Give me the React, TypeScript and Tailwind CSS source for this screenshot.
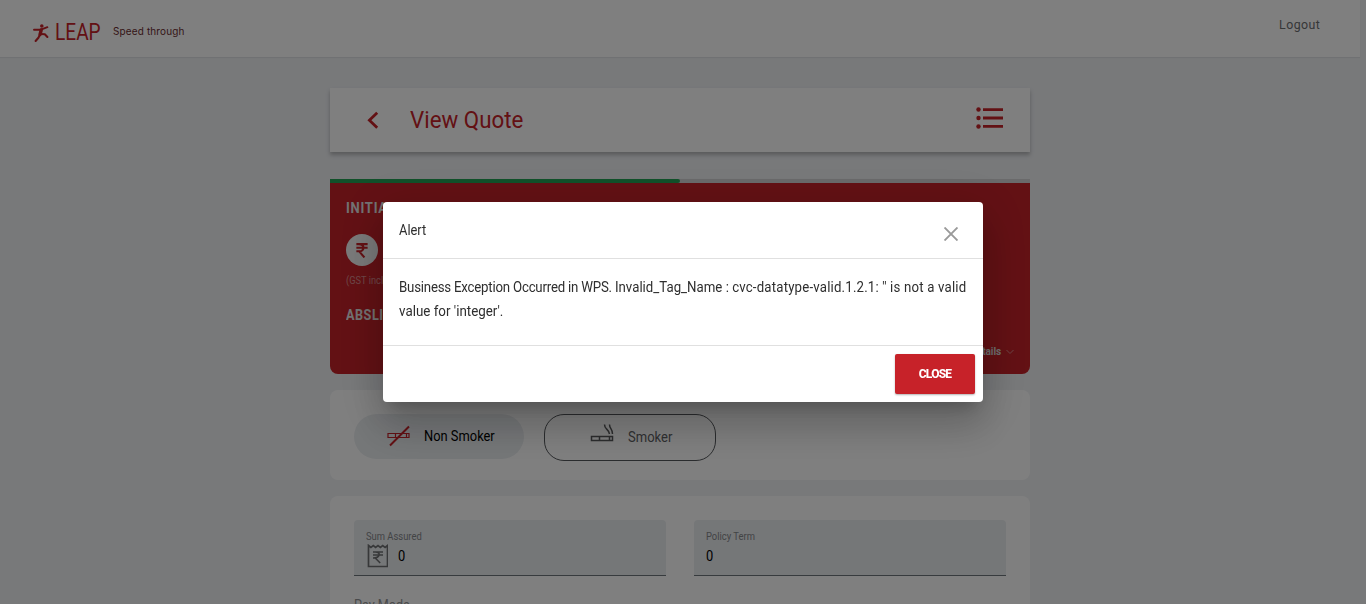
import React from "react";

function LeapFigure() {
  return (
    <svg className="h-[20px] w-[17px]" viewBox="0 0 17 20" fill="none" stroke="#c72229" strokeLinecap="round" strokeLinejoin="round">
      <circle cx="9.8" cy="3" r="1.8" fill="#c72229" stroke="none" />
      <path d="M2 6.800l6.200 0L15.400 4.200" strokeWidth="1.9" />
      <path d="M9.200 7L8 11.600" strokeWidth="3.4" />
      <path d="M7.600 12.400l-1.200 2.400L3.600 18" strokeWidth="2.1" />
      <path d="M8.800 11l4 .3 2.600 2.600" strokeWidth="2.1" />
    </svg>
  );
}

function Rupee({ className }: { className: string }) {
  return (
    <svg className={className} viewBox="0 0 12 16" fill="none" stroke="currentColor">
      <path d="M0 1.2h12M0 5h12M2.6 1.2C9.2 1.2 9.2 8.8 3 8.8H0M3 9l5.6 6.4" strokeWidth="2.2" />
    </svg>
  );
}

function Header() {
  return (
    <header className="flex h-[57px] w-[1360px] shrink-0 justify-between bg-white shadow-[0_1px_1px_rgba(0,0,0,0.06)]">
      <div className="flex h-[65px] items-center pl-8">
        <LeapFigure />
        <span className="ml-1.5 w-[50px] origin-left scale-x-[0.83] pt-px text-[23px] leading-6 text-[#c72229]">LEAP</span>
        <span className="ml-2 origin-left scale-x-[0.95] pb-px font-['Inter',sans-serif] text-[10.5px] tracking-[0.15px] text-[#6b2d30]">
          Speed through
        </span>
      </div>
      <a className="mr-10 w-[41.500px] origin-left scale-x-[0.95] pt-[15px] text-[13px] leading-5 tracking-[0.5px] text-[#6d6e71]">Logout</a>
    </header>
  );
}

function TitleBar() {
  return (
    <section className="mt-[31px] flex h-16 items-center justify-between bg-white pr-[27px] pl-9 shadow-[0_3px_4px_rgba(0,0,0,0.25)]">
      <div className="flex items-center">
        <svg className="h-[18px] w-3.5" viewBox="0 0 14 18" fill="none" stroke="#c72229" strokeWidth="2.8">
          <path d="M11.200 1.800L3.400 9.300l7.800 7.500" />
        </svg>
        <h1 className="ml-[30px] origin-left scale-x-[0.93] text-[24px] leading-8 text-[#c72229]">View Quote</h1>
      </div>
      <svg className="mb-[5px] h-[22px] w-[27px]" viewBox="0 0 27 22" fill="#c72229">
        <circle cx="2.5" cy="2.5" r="2.2" />
        <circle cx="2.5" cy="11" r="2.2" />
        <circle cx="2.5" cy="19.5" r="2.2" />
        <path d="M7 1.200h20v2.700H7zM7 9.600h20v2.800H7zM7 18.100h20v2.700H7z" />
      </svg>
    </section>
  );
}

function PremiumCard() {
  return (
    <section className="mt-[27px] h-[195px] overflow-hidden rounded-b-lg bg-[#c72229] text-white">
      <div className="h-1 bg-[#d4d5d6]">
        <div className="h-1 w-1/2 rounded-r-xs bg-[#22a355]" />
      </div>
      <div className="flex h-[191px] flex-col px-4 pt-[15px]">
        <h2 className="origin-left scale-x-[0.93] text-[14px] leading-5 font-bold tracking-[0.8px] text-[#e6e6e6]">INITIAL</h2>
        <div className="mt-4 flex size-8 items-center justify-center rounded-full bg-[#f4f4f4] text-[#c72229]">
          <Rupee className="h-[15px] w-3" />
        </div>
        <p className="mt-[5px] origin-left scale-x-[0.93] text-[10px] leading-5 text-[#dc8f92]">(GST included)</p>
        <h2 className="mt-[14px] origin-left scale-x-[0.9] text-[14px] leading-5 font-bold tracking-[0.6px] text-[#e6e6e6]">ABSLI</h2>
        <div className="mt-[19px] flex items-center justify-end text-[#dedede]">
          <span className="text-[10px] leading-4 font-bold tracking-[-0.1px]">Details</span>
          <svg className="ml-[5px] h-2 w-2" viewBox="0 0 8 8" fill="none" stroke="#d8898c">
            <path d="M.5 2L4 5.500 7.500 2" />
          </svg>
        </div>
      </div>
    </section>
  );
}

function SmokerCard() {
  return (
    <section className="mt-4 flex h-[90px] gap-5 rounded-lg bg-white p-6">
      <button className="flex h-[45px] w-[170px] items-center rounded-full bg-[#ebeef1] pl-[33px]">
        <svg className="mb-px h-[22px] w-6" viewBox="0 0 24 22" fill="none" stroke="#c72229">
          <path d="M1 8.500h21v4H1zM8.500 8.500v4M19.500 8.500v4" strokeWidth="1.2" />
          <path d="M3 20.500L22 1.500" strokeWidth="1.9" />
        </svg>
        <span className="ml-[13px] origin-left scale-x-[0.92] text-[14px] whitespace-nowrap text-black">Non Smoker</span>
      </button>
      <button className="flex h-[47px] w-[172px] items-center rounded-[20px] border border-[#55585c] pl-[45px]">
        <svg className="mb-2.5 h-5 w-6" viewBox="0 0 24 20" fill="none" stroke="#58595b">
          <path d="M1.500 13.500h21v4h-21zM9.500 13.500v4M19.500 13.500v4" strokeWidth="1.5" />
          <path d="M14.500 1.500c0 5 4 4 5 9.500M19.500 1.500c0 4.500 3 4 3 9.500" strokeWidth="1.5" />
        </svg>
        <span className="ml-3.5 origin-left scale-x-[0.93] text-[14px] text-[#606164]">Smoker</span>
      </button>
    </section>
  );
}

function Field({ label, icon }: { label: string; icon?: React.ReactNode }) {
  return (
    <div className="h-14 w-[312px] rounded-t border-b border-[#6f777c] bg-[#ebeef1] px-3 pt-2.5">
      <div className="origin-left scale-x-[0.94] text-[10px] leading-[13px] text-[#85888b]">{label}</div>
      <div className="flex h-[26px] items-center">
        {icon}
        <span className="origin-left scale-x-[0.92] text-[14px] leading-6 text-black">0</span>
      </div>
    </div>
  );
}

function ReceiptIcon() {
  return (
    <svg className="mr-2.5 mb-px h-6 w-[22px] shrink-0" viewBox="0 0 22 24" fill="none" stroke="#6f7173">
      <path d="M2.500 1.500l2.400 2 2.400-2 2.300 2 2.400-2 2.400 2 2.300-2 2.400 2 2.400-2v21h-19z" strokeWidth="1.700" />
      <path d="M7 8h10M7 11h10M9.500 8c5.500 0 5 6-2.500 6M9.200 14l5 5" strokeWidth="1.600" />
    </svg>
  );
}

function DetailsCard() {
  return (
    <section className="mt-4 h-[240px] rounded-lg bg-white p-6">
      <div className="flex justify-between">
        <Field label="Sum Assured" icon={<ReceiptIcon />} />
        <Field label="Policy Term" />
      </div>
      <div className="mt-[19px] origin-left scale-x-[0.9] text-[14px] leading-5 text-[#939597]">Pay Mode</div>
    </section>
  );
}

function AlertDialog() {
  return (
    <div className="fixed inset-0 flex items-center justify-center bg-black/50">
      <div
        role="alertdialog"
        className="flex h-[200px] w-[600px] flex-col rounded bg-white text-[#2e2e2e] shadow-[0_11px_15px_-7px_rgba(0,0,0,0.2),0_24px_38px_3px_rgba(0,0,0,0.14),0_9px_46px_8px_rgba(0,0,0,0.12)]"
      >
        <div className="flex h-[57px] items-center justify-between border-b border-[#e0e0e0] pr-[25px] pl-4">
          <span className="origin-left scale-x-[0.92] text-[14px] leading-6">Alert</span>
          <svg className="mt-2 h-3.5 w-3.5" viewBox="0 0 14 14" stroke="#999" strokeWidth="1.900">
            <path d="M.5.5l13 13M13.500.5l-13 13" />
          </svg>
        </div>
        <p className="h-[87px] border-b border-[#e0e0e0] px-4 pt-4 text-[14px] leading-6">
          <span className="block origin-left scale-x-[0.946] whitespace-nowrap">
            <span className="tracking-[-0.22px]">Business Exception Occurred in WPS. </span>
            <span>Invalid_Tag_Name : </span>
            <span className="tracking-[0.19px]">cvc-datatype-valid.1.2.1: '' is not a valid</span>
          </span>
          <span className="block origin-left scale-x-[0.955]">value for 'integer'.</span>
        </p>
        <div className="flex justify-end p-2">
          <button className="h-10 w-20 rounded-xs bg-[#c72229] text-[12px] font-extrabold tracking-[-0.75px] text-white shadow-[0_1px_2px_rgba(0,0,0,0.3)]">
            CLOSE
          </button>
        </div>
      </div>
    </div>
  );
}

export default function App() {
  return (
    <div className="h-[604px] overflow-hidden bg-[#f0f2f5] font-['Roboto',sans-serif]">
      <Header />
      <main className="ml-[330px] w-[700px]">
        <TitleBar />
        <PremiumCard />
        <SmokerCard />
        <DetailsCard />
      </main>
      <AlertDialog />
    </div>
  );
}
